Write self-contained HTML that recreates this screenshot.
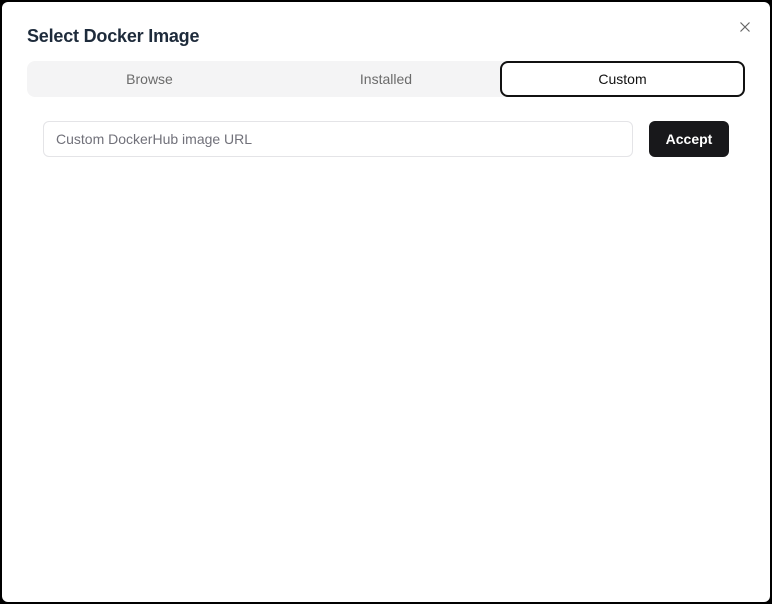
<!DOCTYPE html>
<html><head><style>
html,body{margin:0;padding:0;width:772px;height:604px;background:#000;overflow:hidden;font-family:"Liberation Sans",sans-serif}
.m{position:absolute;left:2px;top:2px;width:768px;height:600px;background:#fff;border-radius:6px}
.t{position:absolute;left:27px;top:26px;font-size:18px;font-weight:bold;color:#1e2b3b;letter-spacing:-0.2px}
.x{position:absolute;left:739px;top:21px}
.tabs{position:absolute;left:27px;top:61px;width:718px;height:36px;background:#f4f4f5;border-radius:8px}
.tab{position:absolute;top:0;height:36px;line-height:36px;text-align:center;font-size:14px;color:#6b6b6b}
.cu{position:absolute;left:500px;top:61px;width:241px;height:32px;border:2px solid #111;border-radius:8px;background:#fff;text-align:center;line-height:32px;font-size:14px;color:#111}
.in{position:absolute;left:43px;top:121px;border:1px solid #e4e4e7;border-radius:6px;line-height:34px;font-size:14px;color:#71717a;padding-left:12px;box-sizing:border-box;width:590px;height:36px}
.b{position:absolute;left:649px;top:121px;width:80px;height:36px;background:#18181b;border-radius:6px;color:#fff;font-weight:bold;font-size:14px;text-align:center;line-height:36px}
</style></head><body>
<div class="m"></div>
<div class="t">Select Docker Image</div>
<svg class="x" width="12" height="12" viewBox="0 0 12 12"><path d="M1.5 1.5L10.5 10.5M10.5 1.5L1.5 10.5" stroke="#666" stroke-width="1.2"/></svg>
<div class="tabs"><div class="tab" style="left:0;width:245px">Browse</div><div class="tab" style="left:240px;width:238px">Installed</div></div>
<div class="cu">Custom</div>
<div class="in">Custom DockerHub image URL</div>
<div class="b">Accept</div>
</body></html>
